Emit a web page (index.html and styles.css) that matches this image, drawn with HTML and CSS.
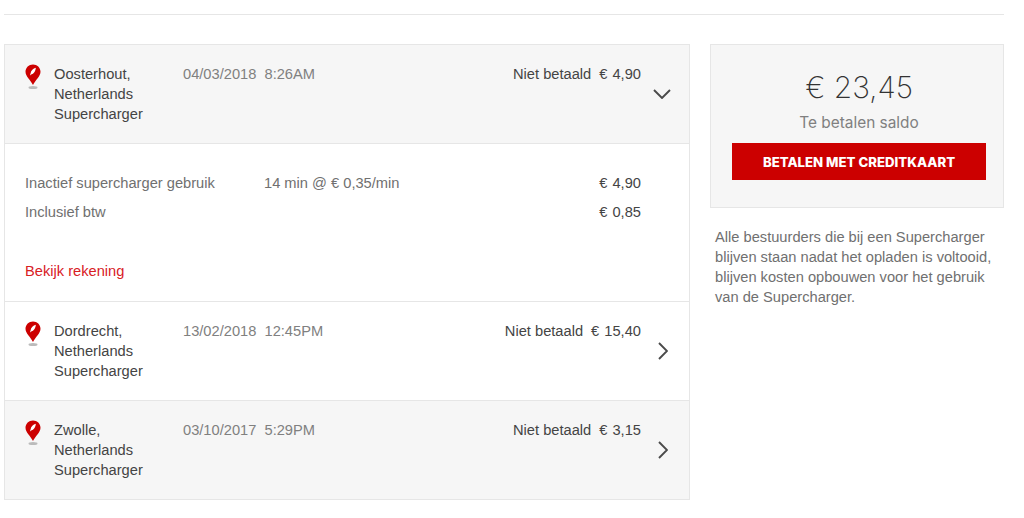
FILE: index.html
```html
<!DOCTYPE html>
<html lang="nl">
<head>
<meta charset="utf-8">
<title>Supercharger</title>
<link rel="stylesheet" href="styles.css">
</head>
<body>
<svg class="defs" width="0" height="0" aria-hidden="true">
  <symbol id="pin" viewBox="0 0 16 26">
    <ellipse cx="8" cy="23.5" rx="4.5" ry="1.5" fill="#bbb"/>
    <path d="M8 0.5C3.8 0.5 0.5 3.7 0.5 7.8 0.5 12.5 5.5 16 8 21 10.5 16 15.5 12.5 15.5 7.8 15.5 3.7 12.2 0.5 8 0.5Z" fill="#cc0000"/>
    <path d="M10.8 3.8C8.2 4.6 6 6.6 5.6 9.2L5 11.6 6.6 10.2C9 9.8 10.6 7 10.8 3.8Z" fill="#fff"/>
  </symbol>
</svg>
<div class="page">
  <hr class="rule">
  <div class="columns">
    <main class="list">
      <section class="row shaded">
        <svg class="pin"><use href="#pin"/></svg>
        <div class="place">Oosterhout,<br>Netherlands<br>Supercharger</div>
        <div class="when">04/03/2018&nbsp; 8:26AM</div>
        <div class="amount-col">
          <div class="amount"><span class="state">Niet betaald</span><span class="price">€ 4,90</span></div>
          <svg class="chev down" viewBox="0 0 18 10"><path d="M1 1l8 8 8-8"/></svg>
        </div>
      </section>
      <section class="detail">
        <div class="line"><span class="l-name">Inactief supercharger gebruik</span><span class="l-rate">14 min @ € 0,35/min</span><span class="l-val price">€ 4,90</span></div>
        <div class="line"><span class="l-name">Inclusief btw</span><span class="l-rate"></span><span class="l-val price">€ 0,85</span></div>
        <a class="invoice" href="#">Bekijk rekening</a>
      </section>
      <section class="row">
        <svg class="pin"><use href="#pin"/></svg>
        <div class="place">Dordrecht,<br>Netherlands<br>Supercharger</div>
        <div class="when">13/02/2018&nbsp; 12:45PM</div>
        <div class="amount-col">
          <div class="amount"><span class="state">Niet betaald</span><span class="price">€ 15,40</span></div>
          <svg class="chev right" viewBox="0 0 10 18"><path d="M1 1l8 8-8 8"/></svg>
        </div>
      </section>
      <section class="row shaded">
        <svg class="pin"><use href="#pin"/></svg>
        <div class="place">Zwolle,<br>Netherlands<br>Supercharger</div>
        <div class="when">03/10/2017&nbsp; 5:29PM</div>
        <div class="amount-col">
          <div class="amount"><span class="state">Niet betaald</span><span class="price">€ 3,15</span></div>
          <svg class="chev right" viewBox="0 0 10 18"><path d="M1 1l8 8-8 8"/></svg>
        </div>
      </section>
    </main>
    <aside class="side">
      <div class="balance">
        <div class="total">€ 23,45</div>
        <div class="total-label">Te betalen saldo</div>
        <a class="pay" href="#">BETALEN MET CREDITKAART</a>
      </div>
      <p class="note">Alle bestuurders die bij een Supercharger blijven staan nadat het opladen is voltooid, blijven kosten opbouwen voor het gebruik van de Supercharger.</p>
    </aside>
  </div>
</div>
</body>
</html>
```
FILE: styles.css
```css
* { box-sizing: border-box; }
html, body { margin: 0; background: #fff; }
body { font: 14.667px/20px "Liberation Sans", Arial, sans-serif; color: #444; overflow: hidden; }
.defs { position: absolute; }
.page { width: 1000px; margin-left: 4px; padding-top: 14px; }
.rule { margin: 0 0 29px; border: 0; border-top: 1px solid #e6e6e6; }
.columns { display: flex; align-items: flex-start; gap: 20px; }
.list { width: 687px; border: 1px solid #e6e6e6; }
.row { display: flex; height: 99px; padding: 19px 48px 0 20px; border-bottom: 1px solid #e6e6e6; background: #fff; }
.row:last-child { border-bottom: 0; height: 98px; }
.row.shaded { background: #f6f6f6; }
.pin { width: 16px; height: 26px; flex: none; margin-right: 13px; }
.place { width: 129px; flex: none; }
.when { color: #808080; white-space: nowrap; }
.amount-col { margin-left: auto; display: flex; flex-direction: column; align-items: flex-end; }
.amount { display: flex; gap: 8px; white-space: nowrap; }
.price { word-spacing: 1px; }
.chev { fill: none; stroke: #4a4a4a; stroke-width: 1.9; }
.chev.down { width: 18px; height: 10px; margin: 5px -30px 0 0; }
.chev.right { width: 10px; height: 18px; margin: 1px -27px 0 0; }
.detail { height: 158px; padding: 29px 48px 0 20px; border-bottom: 1px solid #e6e6e6; color: #707070; }
.line { display: flex; height: 29px; }
.l-name { width: 239px; flex: none; }
.l-rate { flex: 1; }
.l-val { color: #444; }
.invoice { display: block; margin-top: 30px; color: #d8201f; text-decoration: none; }
.side { width: 294px; flex: none; }
.balance { height: 164px; padding: 22px 17px 0 21px; border: 1px solid #e6e6e6; background: #f6f6f6; text-align: center; }
.total { font: 200 29.8px/40px Inter, sans-serif; color: #333; }
.total-label { margin-top: 6px; font: 400 15.4px/20px Inter, sans-serif; color: #808080; }
.pay { display: block; height: 37px; margin-top: 10px; background: #cc0000; color: #fff; font: 800 13.2px/38px Inter, sans-serif; text-decoration: none; }
.note { margin: 19px 5px 0; color: #707070; }
```
